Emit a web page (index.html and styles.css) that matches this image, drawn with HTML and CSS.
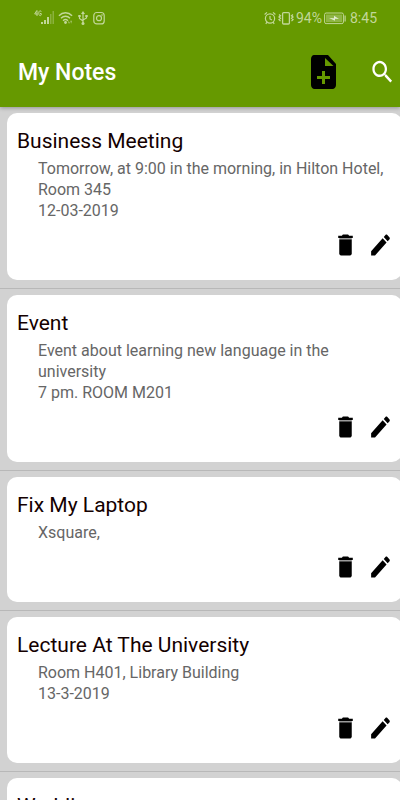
FILE: index.html
```html
<!DOCTYPE html>
<html lang="en">
<head>
    <meta charset="UTF-8">
    <meta name="viewport" content="width=device-width, initial-scale=1.0">
    <title>My Notes</title>
    <link rel="stylesheet" href="styles.css">
</head>
<body>
    <!-- shared icons -->
    <svg class="sprite" aria-hidden="true">
        <symbol id="icon-delete" viewBox="0 0 24 24" preserveAspectRatio="none">
            <path d="M6 19c0 1.1.9 2 2 2h8c1.1 0 2-.9 2-2V7H6v12z"></path>
            <path d="M19 4h-3.500l-1-1h-5l-1 1H5v2h14V4z"></path>
            <path d="M6 6h12v1H6z" fill="#999"></path>
        </symbol>
        <symbol id="icon-edit" viewBox="0 0 24 24" preserveAspectRatio="none">
            <path d="M3 17.250V21h3.750L17.810 9.940l-3.750-3.750L3 17.250zM20.710 7.040c.39-.39.39-1.020 0-1.410l-2.340-2.340c-.39-.39-1.020-.39-1.410 0l-1.830 1.830 3.750 3.750 1.830-1.830z"></path>
        </symbol>
    </svg>

    <header class="header">
        <div class="status-bar">
            <div class="status-group">
                <svg class="signal" width="20" height="16" viewBox="0 0 20 16">
                    <g fill="none" stroke="currentColor" stroke-width="1">
                        <path d="M2.800 .5L.7 4h3M3 .5V6"></path>
                        <path d="M7.200 1.800C6.800 .2 4.800 .2 4.800 3.200S6.800 6 7.200 5V3.500H6"></path>
                    </g>
                    <path d="M7 12h2v2H7zM10 10h2v4h-2zM13 7h2v7h-2z"></path>
                    <path d="M16 4h1.500v10H16zM18.500 1H20v13h-1.500z" opacity=".4"></path>
                </svg>
                <svg width="15" height="16" viewBox="0 0 16 16">
                    <g fill="none" stroke="currentColor" stroke-width="1.500">
                        <path d="M1 5.500C5 1.300 11 1.300 15 5.500M3.200 8.300c2.800-2.800 6.800-2.800 9.600 0M5.400 10.900c1.500-1.500 3.700-1.500 5.200 0"></path>
                    </g>
                    <circle cx="8" cy="12.800" r="1.500"></circle>
                    <path d="M11 11l2 2.500h-2zM14 14l-1-3h2z" opacity=".7"></path>
                </svg>
                <svg width="12" height="16" viewBox="0 0 12 16">
                    <path d="M6 3v10M2.500 6v2.500L6 11M9.500 6v2L6 10" fill="none" stroke="currentColor" stroke-width="1.200"></path>
                    <path d="M6 1l2 3H4zM1.300 5h2.400v2H1.300zM8.300 5h2.400v2H8.300z"></path>
                    <circle cx="6" cy="13.500" r="1.500"></circle>
                </svg>
                <svg width="12" height="16" viewBox="0 0 12 16">
                    <g fill="none" stroke="currentColor" stroke-width="1.200">
                        <rect x=".8" y="2.500" width="10.400" height="11.400" rx="3"></rect>
                        <circle cx="6" cy="8.200" r="2.500"></circle>
                    </g>
                    <circle cx="9" cy="5" r=".8"></circle>
                </svg>
            </div>
            <div class="status-group status-right">
                <svg width="12" height="16" viewBox="0 0 12 16">
                    <g fill="none" stroke="currentColor" stroke-width="1.200">
                        <circle cx="6" cy="8.500" r="4.600"></circle>
                        <path d="M6 6v3l2 1M.6 4.500L3 2.400M11.400 4.500L9 2.400M3 12l-1.200 1.800M9 12l1.200 1.800"></path>
                    </g>
                </svg>
                <svg width="16" height="16" viewBox="0 0 16 16">
                    <g fill="none" stroke="currentColor" stroke-width="1.300">
                        <rect x="4.600" y="2.600" width="6.800" height="11.400" rx="1"></rect>
                        <path d="M1 4.500l1.500 1.200L1 7l1.500 1.300L1 9.600l1.500 1.500M15 4.500l-1.500 1.200L15 7l-1.500 1.300L15 9.600l-1.500 1.500"></path>
                    </g>
                </svg>
                <span>94%</span>
                <svg class="battery" width="22" height="16" viewBox="0 0 22 16">
                    <rect x=".6" y="3" width="18.800" height="10.600" rx="1.500" fill="none" stroke="currentColor"></rect>
                    <rect x="2" y="4.500" width="16" height="7.600" opacity=".45"></rect>
                    <path d="M20.500 5.500h1.200v6h-1.200z"></path>
                    <path d="M5 8l5 .3V5.800L15 9l-4-.2v2z" fill="#e2ecd0"></path>
                </svg>
                <span>8:45</span>
            </div>
        </div>
        <div class="toolbar">
            <h1>My Notes</h1>
            <button class="add-btn" aria-label="Add note">
                <svg width="34" height="40" viewBox="0 0 34 40">
                    <path d="M7 3h14l8 9v21c0 2.200-1.500 4-3.500 4h-18C5.500 37 4 35.200 4 33V7c0-2.200 1.300-4 3-4zM18 6v8h8.500zM15 19v5h-5v3h5v5h3v-5h5v-3h-5v-5z" fill-rule="evenodd"></path>
                </svg>
            </button>
            <button class="search-btn" aria-label="Search">
                <svg width="27" height="30" viewBox="0 0 24 24" preserveAspectRatio="none">
                    <path d="M15.500 14h-.79l-.28-.27C15.410 12.590 16 11.110 16 9.500 16 5.910 13.090 3 9.500 3S3 5.910 3 9.500 5.910 16 9.500 16c1.610 0 3.090-.59 4.230-1.570l.27.28v.79l5 4.990L20.490 19l-4.990-5zm-6 0C7.010 14 5 11.990 5 9.500S7.010 5 9.500 5 14 7.010 14 9.500 11.990 14 9.500 14z"></path>
                </svg>
            </button>
        </div>
    </header>

    <main class="notes">
        <article class="note">
            <div class="card">
                <h2>Business Meeting</h2>
                <p>Tomorrow, at 9:00 in the morning, in Hilton Hotel, Room 345<br>12-03-2019</p>
                <div class="actions">
                    <button aria-label="Delete Business Meeting"><svg><use href="#icon-delete"></use></svg></button>
                    <button aria-label="Edit Business Meeting"><svg><use href="#icon-edit"></use></svg></button>
                </div>
            </div>
        </article>
        <article class="note">
            <div class="card">
                <h2>Event</h2>
                <p>Event about learning new language in the university<br>7 pm. ROOM M201</p>
                <div class="actions">
                    <button aria-label="Delete Event"><svg><use href="#icon-delete"></use></svg></button>
                    <button aria-label="Edit Event"><svg><use href="#icon-edit"></use></svg></button>
                </div>
            </div>
        </article>
        <article class="note">
            <div class="card">
                <h2>Fix My Laptop</h2>
                <p>Xsquare,</p>
                <div class="actions">
                    <button aria-label="Delete Fix My Laptop"><svg><use href="#icon-delete"></use></svg></button>
                    <button aria-label="Edit Fix My Laptop"><svg><use href="#icon-edit"></use></svg></button>
                </div>
            </div>
        </article>
        <article class="note">
            <div class="card">
                <h2>Lecture At The University</h2>
                <p>Room H401, Library Building<br>13-3-2019</p>
                <div class="actions">
                    <button aria-label="Delete Lecture At The University"><svg><use href="#icon-delete"></use></svg></button>
                    <button aria-label="Edit Lecture At The University"><svg><use href="#icon-edit"></use></svg></button>
                </div>
            </div>
        </article>
        <article class="note">
            <div class="card">
                <h2>Wedding</h2>
                <div class="actions">
                    <button aria-label="Delete Wedding"><svg><use href="#icon-delete"></use></svg></button>
                    <button aria-label="Edit Wedding"><svg><use href="#icon-edit"></use></svg></button>
                </div>
            </div>
        </article>
    </main>
</body>
</html>
```

FILE: styles.css
```css
* {
    margin: 0;
    padding: 0;
    box-sizing: border-box;
}

body {
    font-family: Roboto, "Liberation Sans", sans-serif;
    height: 100vh;
    background: #d2d2d2;
    display: flex;
    flex-direction: column;
    overflow: hidden;
}

svg {
    display: block;
    fill: currentColor;
}

button {
    border: none;
    background: none;
    color: #000;
    cursor: pointer;
}

.sprite {
    position: absolute;
    width: 0;
    height: 0;
}

.header {
    background: #669900;
    box-shadow: 0 1px 4px rgba(0, 0, 0, 0.3);
    flex-shrink: 0;
    z-index: 1;
}

.status-bar {
    display: flex;
    justify-content: space-between;
    height: 36px;
    padding: 0 23px 0 34px;
    color: #c2d799;
    font-size: 14px;
}

.status-group {
    display: flex;
    align-items: center;
    gap: 4px;
}

.status-right {
    gap: 2px;
}

.battery {
    margin-right: 2px;
}

.toolbar {
    display: flex;
    align-items: center;
    height: 71px;
    padding: 0 4px 0 18px;
}

.toolbar h1 {
    flex: 1;
    padding-top: 2px;
    color: #fff;
    font-size: 23px;
    font-weight: 500;
}

.add-btn {
    margin-right: 28px;
}

.search-btn {
    color: #fff;
}

.notes {
    flex: 1;
    min-height: 0;
    overflow: hidden;
}

.note {
    padding: 6px 0 8px 7px;
    border-bottom: 1px solid #b8b8b8;
}

/* cards run slightly past the right edge of the screen */
.card {
    margin-right: -2px;
    padding: 15px 9px 21px 10px;
    background: #fff;
    border-radius: 10px;
}

.card h2 {
    color: #140000;
    font-size: 21px;
    font-weight: 400;
    line-height: 26px;
}

.card p {
    padding: 4px 0 0 21px;
    color: #666;
    font-size: 16px;
    line-height: 21px;
}

.actions {
    display: flex;
    justify-content: flex-end;
    gap: 10px;
    margin-top: 10px;
}

.actions svg {
    width: 25px;
    height: 28px;
}
```
